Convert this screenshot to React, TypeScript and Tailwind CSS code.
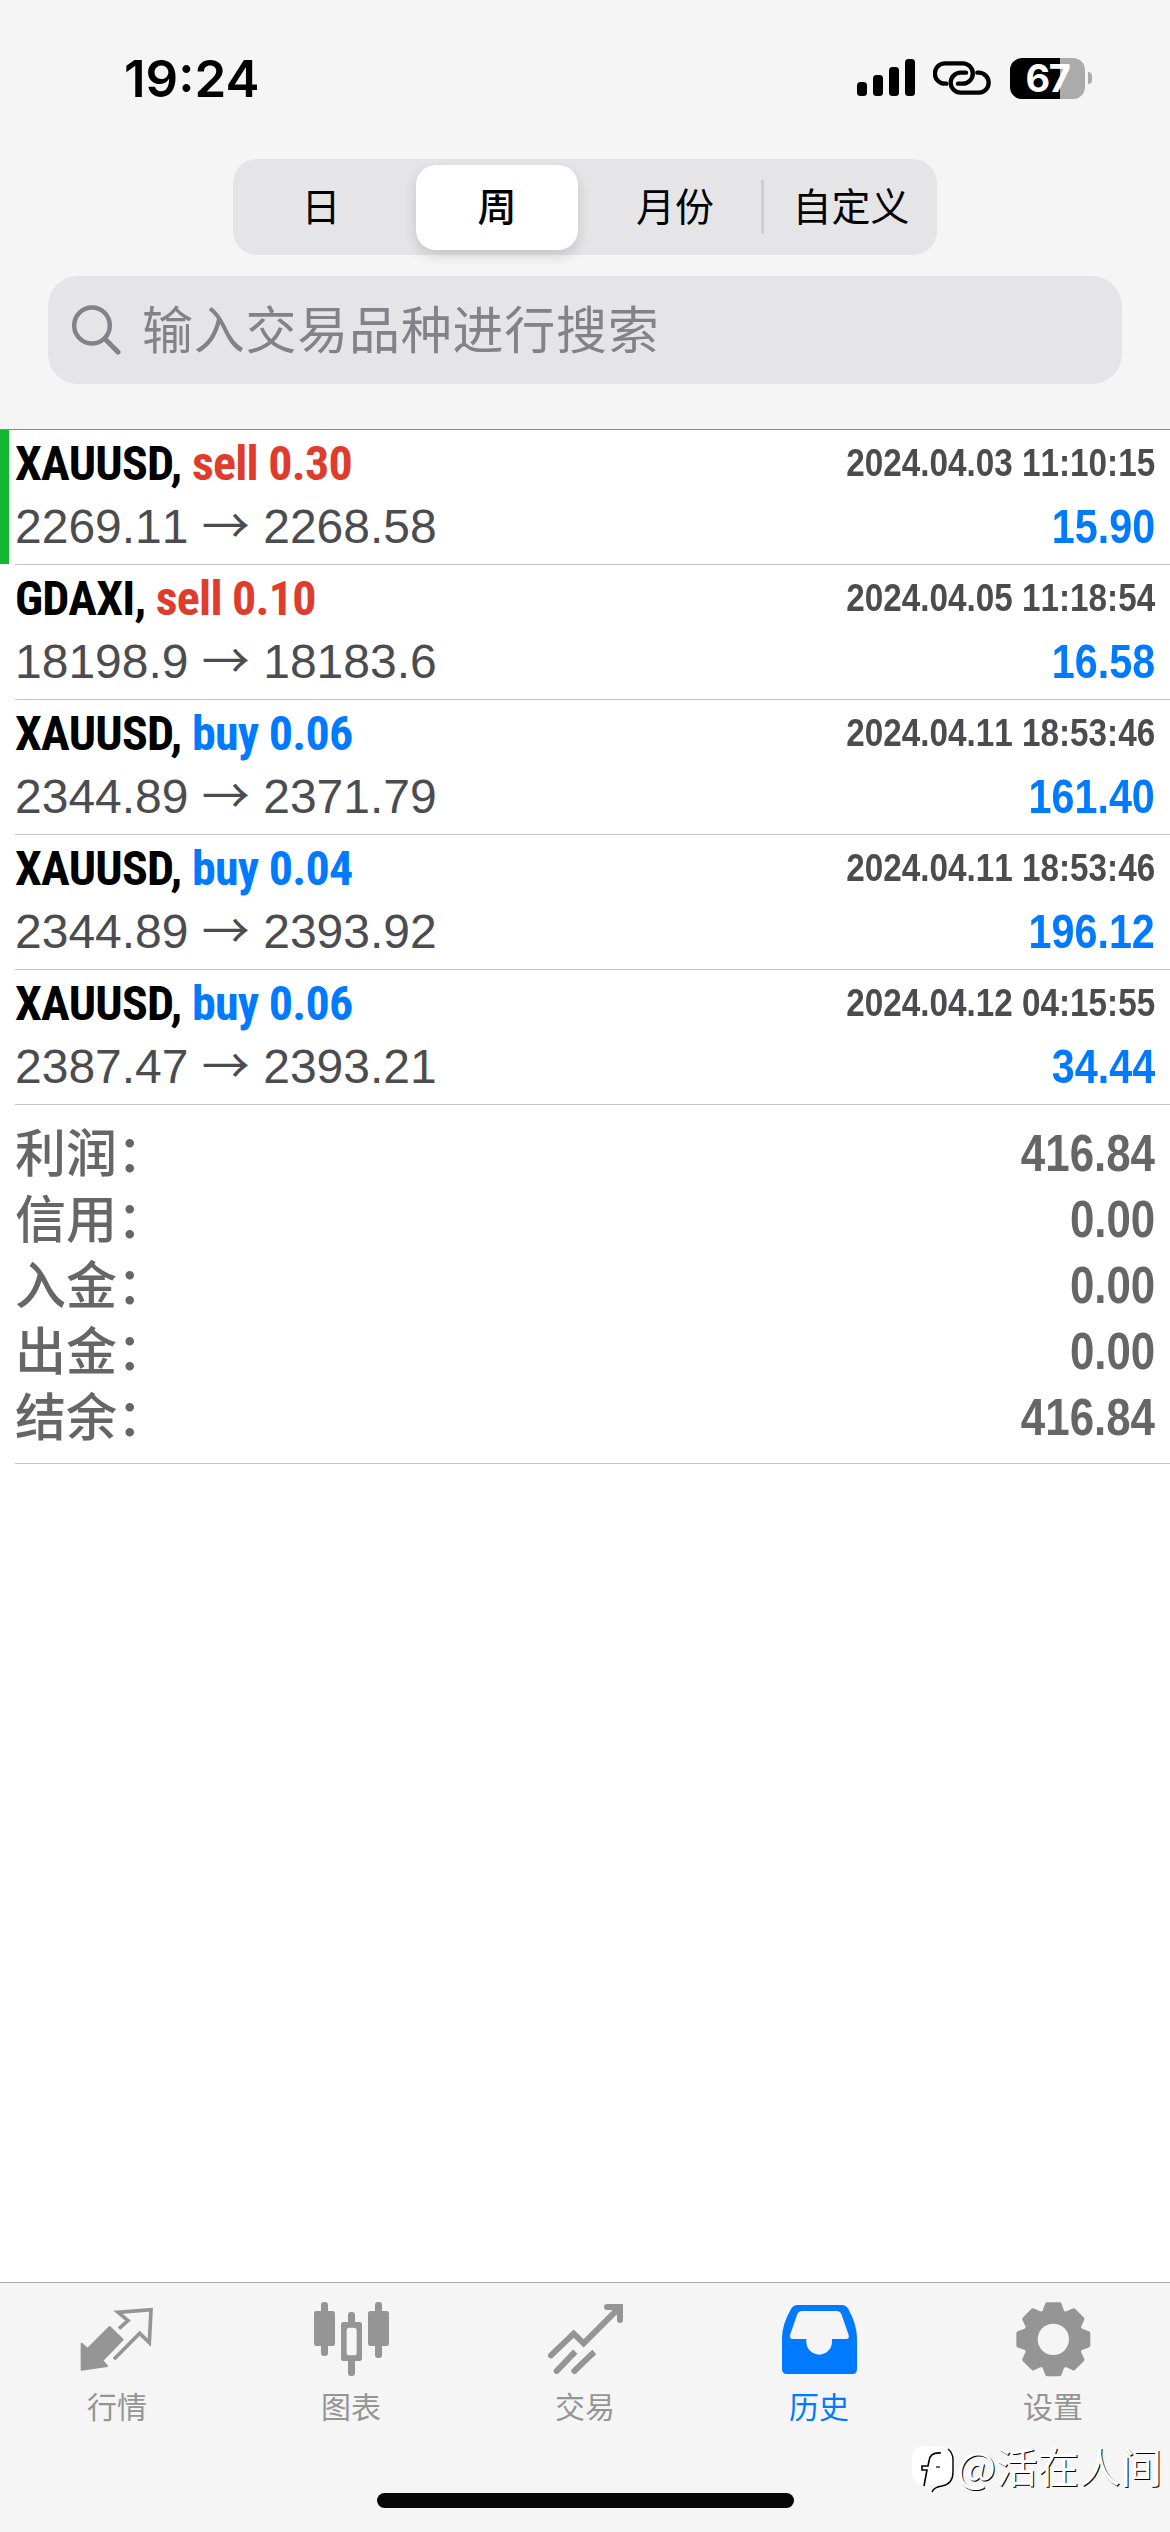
import { useState } from 'react';
import type { ReactNode } from 'react';
import clsx from 'clsx';

type Deal = {
  symbol: string;
  side: 'sell' | 'buy';
  volume: string;
  open: string;
  close: string;
  time: string;
  profit: string;
};

const DEALS: Deal[] = [
  { symbol: 'XAUUSD,', side: 'sell', volume: '0.30', open: '2269.11', close: '2268.58', time: '2024.04.03 11:10:15', profit: '15.90' },
  { symbol: 'GDAXI,', side: 'sell', volume: '0.10', open: '18198.9', close: '18183.6', time: '2024.04.05 11:18:54', profit: '16.58' },
  { symbol: 'XAUUSD,', side: 'buy', volume: '0.06', open: '2344.89', close: '2371.79', time: '2024.04.11 18:53:46', profit: '161.40' },
  { symbol: 'XAUUSD,', side: 'buy', volume: '0.04', open: '2344.89', close: '2393.92', time: '2024.04.11 18:53:46', profit: '196.12' },
  { symbol: 'XAUUSD,', side: 'buy', volume: '0.06', open: '2387.47', close: '2393.21', time: '2024.04.12 04:15:55', profit: '34.44' },
];

const SUMMARY = [
  { label: '利润：', value: '416.84' },
  { label: '信用：', value: '0.00' },
  { label: '入金：', value: '0.00' },
  { label: '出金：', value: '0.00' },
  { label: '结余：', value: '416.84' },
];

const PERIODS = ['日', '周', '月份', '自定义'];

/** Gear outline with eight teeth around (112, 112) */
const GEAR_POINTS = Array.from({ length: 8 }, (_, i) => {
  const corners: [number, number][] = [[-22.5, 84], [-18, 86], [-10, 106], [10, 106], [18, 86]];
  return corners
    .map(([deg, r]) => {
      const a = ((i * 45 + deg) * Math.PI) / 180;
      return `${(112 + r * Math.sin(a)).toFixed(1)},${(112 - r * Math.cos(a)).toFixed(1)}`;
    })
    .join(' ');
}).join(' ');

function QuotesIcon() {
  return (
    <svg viewBox="238 126 225 225" className="h-[75px] w-[75px]" fill="currentColor" stroke="currentColor">
      <path d="M243 251 L261 267 L327 201 L366 239 L305 302 L319 318 L243 329 Z" strokeWidth="6" strokeLinejoin="round" />
      <path d="M355 206 L382 182 L352 157 L451 149 L446 248 L417 220 L340 298" fill="none" strokeWidth="11" />
    </svg>
  );
}

function ChartIcon() {
  return (
    <svg viewBox="939 126 225 225" className="h-[75px] w-[75px]" fill="currentColor">
      <rect x="960" y="126" width="21" height="162" rx="9" />
      <rect x="939" y="153" width="63" height="105" rx="7" />
      <rect x="1122" y="126" width="21" height="168" rx="9" />
      <rect x="1101" y="153" width="63" height="105" rx="7" />
      <rect x="1041" y="156" width="21" height="40" rx="9" />
      <rect x="1041" y="292" width="21" height="56" rx="9" />
      <path
        fillRule="evenodd"
        d="M1027 186 H1076 Q1083 186 1083 193 V296 Q1083 303 1076 303 H1027 Q1020 303 1020 296 V193 Q1020 186 1027 186 Z M1045 203 Q1037 203 1037 211 V278 Q1037 286 1045 286 H1059 Q1067 286 1067 278 V211 Q1067 203 1059 203 Z"
      />
    </svg>
  );
}

function TradeIcon() {
  return (
    <svg viewBox="351 126 225 225" className="h-[75px] w-[75px]" fill="none" stroke="currentColor" strokeWidth="18" strokeLinecap="round">
      <path d="M360 286 L428 221 L458 250 L562 146" />
      <path d="M528 141 H567 V180" />
      <path d="M545 150 H558 V163 Z" fill="currentColor" strokeWidth="4" />
      <path d="M377 333 L424 284 M430 333 L481 284" />
      <path d="M424 284 L433 275 M481 284 L490 276" strokeLinecap="butt" />
    </svg>
  );
}

function HistoryIcon() {
  return (
    <svg viewBox="1053 126 225 225" className="h-[75px] w-[75px]" fill="currentColor" fillRule="evenodd">
      <path d="M1100 135 H1232 Q1245 135 1252 147 Q1278 194 1278 234 V328 Q1278 342 1264 342 H1067 Q1053 342 1053 328 V234 Q1053 194 1080 147 Q1087 135 1100 135 Z M1114 153 Q1103 153 1099 162 L1077 225 Q1074 237 1086 237 H1126 V245 A38.500 39 0 0 0 1203 245 V237 H1245 Q1256 237 1253 225 L1231 162 Q1227 153 1216 153 Z" />
    </svg>
  );
}

function SettingsIcon() {
  return (
    <svg viewBox="0 0 225 225" className="h-[75px] w-[75px]">
      <mask id="gear-hole">
        <rect width="225" height="225" fill="white" />
        <circle cx="112" cy="112" r="47" fill="black" />
      </mask>
      <polygon points={GEAR_POINTS} mask="url(#gear-hole)" fill="currentColor" stroke="currentColor" strokeWidth="13" strokeLinejoin="round" />
    </svg>
  );
}

const TABS: { label: string; icon: ReactNode }[] = [
  { label: '行情', icon: <QuotesIcon /> },
  { label: '图表', icon: <ChartIcon /> },
  { label: '交易', icon: <TradeIcon /> },
  { label: '历史', icon: <HistoryIcon /> },
  { label: '设置', icon: <SettingsIcon /> },
];

function StatusBar() {
  return (
    <div className="flex h-[159px] justify-between pt-[47px] pr-[78px] pl-[124px]">
      <div className="h-[64px] text-[51px] leading-[64px] font-semibold text-black">19:24</div>
      <div className="flex h-[62px] items-center">
        <svg viewBox="0 0 58 38" className="h-[38px] w-[58px]">
          <rect x="0" y="23" width="10" height="14" rx="3.500" />
          <rect x="16" y="16" width="10" height="21" rx="3.500" />
          <rect x="32" y="8" width="10" height="29" rx="3.500" />
          <rect x="48" y="0" width="10" height="37" rx="3.500" />
        </svg>
        <svg viewBox="276 63 174 102" className="ml-[18px] h-[34px] w-[58px]" fill="none" stroke="black" strokeWidth="13">
          <path d="M316 131 H312 A30.500 30.500 0 0 1 312 70 H365 A30.500 30.500 0 0 1 365 131 H351" strokeLinecap="round" />
          <path d="M375 98 H359 A30 30 0 0 0 359 158 H413 A30 30 0 0 0 413 98 H409" strokeLinecap="round" />
        </svg>
        <div className="ml-[19px] flex h-[41px] w-[75px] items-center justify-center rounded-[12px] bg-[linear-gradient(90deg,#000_66.500%,#ababab_66.500%)] text-[38px] leading-none font-bold text-white">
          <span className="tracking-[-1.5px]">67</span>
        </div>
        <div className="ml-[3px] h-[12px] w-[4px] rounded-r-full bg-[#ababab]" />
      </div>
    </div>
  );
}

function DealRow({ deal, marked }: { deal: Deal; marked: boolean }) {
  return (
    <div className="flex h-[135px]">
      <div className={clsx('h-[134px] w-[9px] shrink-0', marked && 'bg-[#14b82f]')} />
      <div className="ml-[6px] flex flex-1 flex-col border-b border-[#c4c4c6] pr-[15px]">
        <div className="flex h-[67px] items-center justify-between font-bold">
          <div className="font-[Roboto] text-[48px] tracking-[-0.75px] whitespace-pre font-stretch-condensed">
            <span className="text-black">{deal.symbol} </span>
            <span className={deal.side === 'sell' ? 'text-[#e03c2d]' : 'text-[#007aff]'}>
              {deal.side} {deal.volume}
            </span>
          </div>
          <div className="origin-right scale-x-[0.853] text-[39px] text-[#4c4c50] [font-kerning:none]">{deal.time}</div>
        </div>
        <div className="flex h-[60px] items-center justify-between">
          <div className="text-[48px] whitespace-pre text-[#4c4c50] [font-kerning:none]">
            {deal.open} <span className="font-['Noto_Sans_CJK_SC'] leading-none">→</span> {deal.close}
          </div>
          <div className="origin-right scale-x-[0.86] text-[48px] font-bold text-[#007aff]">{deal.profit}</div>
        </div>
      </div>
    </div>
  );
}

export default function App() {
  const [period, setPeriod] = useState('周');
  const [tab, setTab] = useState('历史');

  return (
    <div className="flex h-[2532px] w-[1170px] flex-col overflow-hidden bg-white font-[Inter,'Noto_Sans_CJK_SC',sans-serif]">
      {/* Header */}
      <div className="flex h-[430px] shrink-0 flex-col border-b border-[#88888a] bg-[#f5f5f5]">
        <StatusBar />
        <div className="mx-auto flex h-[96px] w-[704px] shrink-0 rounded-[24px] bg-[#e5e5e7]">
          {PERIODS.map((item, i) => (
            <div key={item} className="relative flex w-[176px] items-center px-[7px]">
              <button
                onClick={() => setPeriod(item)}
                className={clsx(
                  'h-[85px] w-full rounded-[20px] text-[39px] text-black',
                  item === period && 'bg-white font-medium shadow-[0_6px_14px_rgba(0,0,0,0.14)]',
                  i > 1 && 'pl-[4px]',
                )}
              >
                {item}
              </button>
              {i === 3 && <div className="absolute top-[21px] left-0 h-[54px] w-[3px] bg-[#cfcfd2]" />}
            </div>
          ))}
        </div>
        <div className="mx-[48px] mt-[21px] flex h-[108px] shrink-0 items-center rounded-[30px] bg-[#e5e5e7] pl-[24px] text-[#838387]">
          <svg viewBox="0 0 49 50" className="h-[50px] w-[49px]" fill="none" stroke="currentColor" strokeWidth="4.500" strokeLinecap="round">
            <ellipse cx="20" cy="20.500" rx="17.800" ry="18" />
            <path d="M33 34 L46 47" strokeWidth="5" />
          </svg>
          <span className="ml-[21px] text-[51px] leading-none tracking-[0.75px]">输入交易品种进行搜索</span>
        </div>
      </div>

      {/* Closed deals and totals */}
      <div className="flex-1 font-['Liberation_Sans','Noto_Sans_CJK_SC',sans-serif]">
        {DEALS.map((deal, i) => (
          <DealRow key={i} deal={deal} marked={i === 0} />
        ))}
        <div className="ml-[15px] flex h-[359px] flex-col border-b border-[#c4c4c6] pt-[16px] pr-[15px] text-[51px] leading-[66px] text-[#666]">
          {SUMMARY.map(row => (
            <div key={row.label} className="flex h-[66px] justify-between">
              <span className="-mt-[4px] font-['Noto_Sans_CJK_SC'] font-medium">{row.label}</span>
              <span className="origin-right scale-x-[0.86] font-bold">{row.value}</span>
            </div>
          ))}
        </div>
      </div>

      {/* Tab bar */}
      <div className="relative flex h-[250px] shrink-0 flex-col border-t border-[#a9a9ab] bg-[#f5f5f5]">
        <div className="flex h-[210px]">
          {TABS.map(({ label, icon }) => (
            <button
              key={label}
              onClick={() => setTab(label)}
              className={clsx('flex w-[234px] flex-col items-center pt-[19px]', label === tab ? 'text-[#007aff]' : 'text-[#959595]')}
            >
              {icon}
              <span className="mt-[8px] text-[30px] leading-[44px]">{label}</span>
            </button>
          ))}
        </div>
        <div className="mx-auto h-[15px] w-[417px] rounded-full bg-[#080808]" />
        <div className="absolute top-[154px] right-[8px] flex items-center text-white">
          <svg viewBox="0 0 42 47" className="mt-[9px] h-[47px] w-[42px]">
            <rect width="40" height="39" rx="12" fill="white" />
            <path d="M36 3 Q41 7 41 14 V26 Q41 38 30 40 Q22 41 20 46" fill="none" stroke="black" strokeWidth="1.400" />
            <path d="M29 7 Q18 6 17 15 L16 20 H10 V24 H15 L12 40" fill="none" stroke="black" strokeWidth="1.600" />
            <path d="M24 21 H28" stroke="black" strokeWidth="1.200" />
          </svg>
          <span className="ml-[3px] font-['Noto_Sans_CJK_SC'] text-[41.500px] leading-[46px] [text-shadow:1px_1px_0.5px_#000]">@活在人间</span>
        </div>
      </div>
    </div>
  );
}
